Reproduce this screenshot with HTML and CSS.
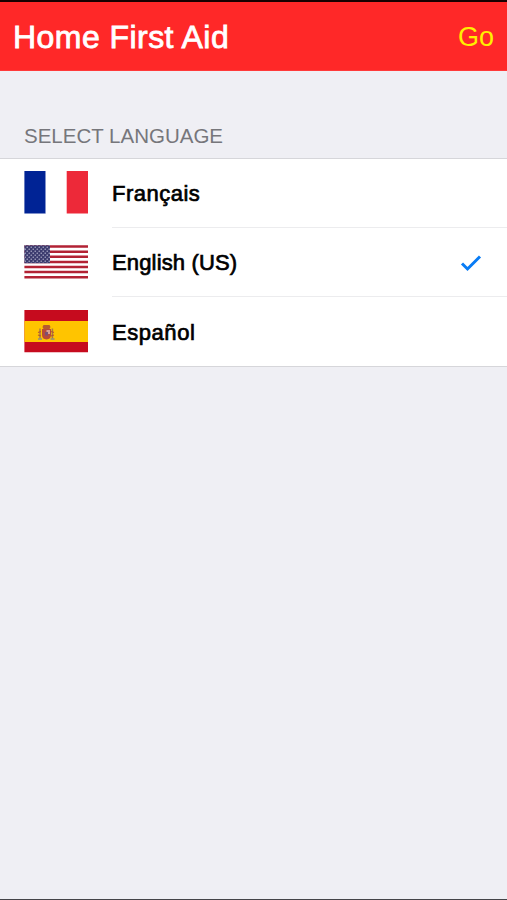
FILE: index.html
```html
<!DOCTYPE html>
<html lang="en">
<head>
<meta charset="utf-8">
<title>Home First Aid</title>
<link rel="stylesheet" href="styles.css">
</head>
<body>
<header class="navbar">
  <h1 class="title">Home First Aid</h1>
  <a class="go">Go</a>
</header>
<main class="content">
  <h2 class="section-title">SELECT LANGUAGE</h2>
  <ul class="list">
    <li class="row">
      <svg class="flag" viewBox="0 0 64 43"><path fill="#002395" d="M.4 0h21.300v42.500H.4z"/><path fill="#fff" d="M21.700 0h21v42.500h-21z"/><path fill="#ed2939" d="M42.700 0H64v42.500H42.700z"/></svg>
      <div class="cell"><span class="label french">Français</span></div>
    </li>
    <li class="row">
      <svg class="flag" viewBox="0 0 64 43">
        <defs><pattern id="stars" width="4" height="4" patternUnits="userSpaceOnUse"><circle cx="1.200" cy="1.200" r=".65" fill="#d0d0e4"/><circle cx="3.200" cy="3.200" r=".65" fill="#d0d0e4"/></pattern></defs>
        <path fill="#fff" d="M.4 5.300H64v34H.4z"/>
        <path stroke="#b22234" stroke-width="2.500" d="M.4 6.600H64M.4 11.700H64M.4 16.800H64M.4 21.900H64M.4 27H64M.4 32.100H64M.4 37.200H64"/>
        <path fill="#3c3b6e" d="M.4 5.300H26v17.900H.4z"/><path fill="url(#stars)" d="M.4 5.300H26v17.900H.4z"/>
      </svg>
      <div class="cell"><span class="label english">English (US)</span>
        <svg class="check" viewBox="0 0 22 18"><path d="M2 9.500l5.500 5.500L20 2.500" fill="none" stroke="#087cf5" stroke-width="3"/></svg>
      </div>
    </li>
    <li class="row">
      <svg class="flag spain" viewBox="0 0 64 43">
        <path fill="#c60b1e" d="M.4 0H64v42.300H.4z"/><path fill="#ffc400" d="M.4 11H64v21H.4z"/>
        <path fill="#b55a30" d="M18.500 17l1-2h6l1 2-1 2h-6z"/>
        <path fill="#b84a38" d="M18 19h9v6q0 4-4.500 4.500Q18 29 18 25z"/>
        <path fill="#d8a094" d="M22.500 20H26v4h-3.500z"/><path fill="#7b4f72" d="M21 22h3v3.500h-3z"/>
        <path stroke="#a67a45" stroke-width="1.500" d="M16 18.500v10M28.400 18.500v10"/>
        <path stroke="#b65531" stroke-width="1.200" d="M14 22.500l3-1M14 25l3 1M27 21.500l3 1M27 26l3-1"/>
        <path stroke="#8d8d86" stroke-width="1.500" d="M14 29h4M26.500 29h4"/>
      </svg>
      <div class="cell"><span class="label spanish">Español</span></div>
    </li>
  </ul>
</main>
</body>
</html>
```
FILE: styles.css
```css
* { box-sizing: border-box; }
body {
  margin: 0;
  height: 900px;
  display: flex;
  flex-direction: column;
  background: #efeff4;
  border-bottom: 1px solid #444448;
  font-family: "Liberation Sans", Arial, sans-serif;
  overflow: hidden;
}
.navbar {
  height: 71px;
  border-top: 2px solid #180000;
  background: #ff2828;
  display: flex;
  align-items: center;
  justify-content: space-between;
  padding: 0 13px;
  border-bottom: 1px solid #ff3a3a;
}
.title {
  margin: 0;
  padding-top: 1px;
  font-size: 32px;
  font-weight: 400;
  line-height: 40px;
  letter-spacing: .45px;
  color: #fff;
  -webkit-text-stroke: .8px #fff;
}
.go {
  padding-top: 2px;
  font-size: 27px;
  line-height: 36px;
  color: #fff000;
}
.section-title {
  margin: 0;
  height: 87px;
  padding: 52px 0 0 24px;
  font-size: 20.5px;
  font-weight: 400;
  line-height: 26px;
  color: #76767b;
}
.list {
  margin: 0;
  padding: 0;
  list-style: none;
  background: #fff;
  border-top: 1px solid #d6d6da;
  border-bottom: 1px solid #d6d6da;
}
.row {
  height: 69px;
  display: flex;
  align-items: center;
  padding-left: 24px;
}
.flag {
  width: 64px;
  height: 43px;
  margin: -2px 24px 0 0;
}
.spain { margin-top: 0; }
.cell {
  flex: 1;
  height: 100%;
  display: flex;
  align-items: center;
  justify-content: space-between;
  padding: 2px 25px 0 0;
  border-bottom: 1px solid #ececee;
}
.row:last-child .cell { padding-top: 3px; border-bottom: 0; }
.label {
  font-size: 22px;
  line-height: 28px;
  color: #000;
  -webkit-text-stroke: .7px #000;
}
.french { letter-spacing: .5px; }
.english { letter-spacing: .15px; }
.spanish { letter-spacing: .55px; }
.check { width: 22px; height: 18px; }
```
